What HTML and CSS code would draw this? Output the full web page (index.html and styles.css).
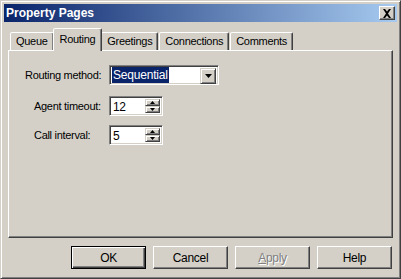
FILE: index.html
```html
<!DOCTYPE html>
<html>
<head>
<meta charset="utf-8">
<link rel="stylesheet" href="styles.css">
</head>
<body>
<div class="window">
  <div class="titlebar">
    <span class="title">Property Pages</span>
    <span class="close">
      <svg width="10" height="9" viewBox="0 0 10 9"><path d="M1 0h2l2 2.5L7 0h2L6 4.5 9 9H7L5 6.5 3 9H1l3-4.5z" fill="#000"/></svg>
    </span>
  </div>
  <div class="body">
    <div class="tabs">
      <div class="tab first">Queue</div>
      <div class="tab active">Routing</div>
      <div class="tab">Greetings</div>
      <div class="tab">Connections</div>
      <div class="tab">Comments</div>
    </div>
    <div class="panel">
      <div class="row r1">
        <span class="label">Routing method:</span>
        <div class="select">
          <span class="selval"><span class="hl">Sequential</span></span>
          <span class="ddbtn"><svg width="7" height="4" viewBox="0 0 7 4"><path d="M0 0h7L3.5 4z" fill="#000"/></svg></span>
        </div>
      </div>
      <div class="row r2">
        <span class="label ind">Agent timeout:</span>
        <div class="spin">
          <span class="val">12</span>
          <span class="arrows">
            <span class="ab"><svg width="5" height="3" viewBox="0 0 5 3"><path d="M2.5 0L5 3H0z" fill="#000"/></svg></span>
            <span class="ab"><svg width="5" height="3" viewBox="0 0 5 3"><path d="M0 0h5L2.5 3z" fill="#000"/></svg></span>
          </span>
        </div>
      </div>
      <div class="row r3">
        <span class="label ind">Call interval:</span>
        <div class="spin">
          <span class="val">5</span>
          <span class="arrows">
            <span class="ab"><svg width="5" height="3" viewBox="0 0 5 3"><path d="M2.5 0L5 3H0z" fill="#000"/></svg></span>
            <span class="ab"><svg width="5" height="3" viewBox="0 0 5 3"><path d="M0 0h5L2.5 3z" fill="#000"/></svg></span>
          </span>
        </div>
      </div>
    </div>
    <div class="buttons">
      <div class="btn default">OK</div>
      <div class="btn">Cancel</div>
      <div class="btn disabled"><u>A</u>pply</div>
      <div class="btn">Help</div>
    </div>
  </div>
</div>
</body>
</html>
```
FILE: styles.css
```css
html, body { margin: 0; padding: 0; }
body { width: 401px; height: 279px; overflow: hidden; background: #d4d0c8; font-family: "Liberation Sans", Arial, sans-serif; font-size: 11px; letter-spacing: -0.3px; color: #000; }
.window { box-sizing: border-box; width: 401px; height: 279px; background: #d4d0c8; border: 1px solid; border-color: #d4d0c8 #404040 #404040 #d4d0c8; box-shadow: inset 1px 1px 0 #fff, inset -1px -1px 0 #808080; padding: 3px; display: flex; flex-direction: column; }
.titlebar { height: 18px; background: linear-gradient(to right, #0a246a, #a6caf0); display: flex; align-items: center; justify-content: space-between; padding: 0 2px 0 2px; }
.title { color: #fff; font-weight: bold; font-size: 12px; letter-spacing: 0; }
.close { width: 16px; height: 14px; box-sizing: border-box; background: #d4d0c8; border: 1px solid; border-color: #fff #404040 #404040 #fff; box-shadow: inset -1px -1px 0 #808080; display: flex; align-items: center; justify-content: center; }
.body { flex: 1; display: flex; flex-direction: column; padding: 6px 4px 0 4px; }
.tabs { display: flex; align-items: flex-end; height: 22px; padding-left: 2px; position: relative; z-index: 1; }
.tab { height: 18px; box-sizing: border-box; padding: 2px 5px 0 5px; border: 1px solid; border-bottom: none; border-color: #fff #404040 transparent #fff; box-shadow: inset -1px 0 0 #808080; border-radius: 2px 2px 0 0; background: #d4d0c8; margin-right: 1px; }
.tab.active { height: 23px; margin: 0 -1px -1px -2px; padding: 4px 6px 0 6px; position: relative; z-index: 2; }
.panel { height: 188px; box-sizing: border-box; border: 1px solid; border-color: #fff #404040 #404040 #fff; box-shadow: inset -1px -1px 0 #808080; padding: 14px 0 0 16px; display: flex; flex-direction: column; }
.row { display: flex; align-items: center; height: 20px; }
.r2 { margin-top: 11px; }
.r3 { margin-top: 9px; }
.label { width: 84px; }
.label.ind { padding-left: 9px; width: 75px; }
.select { width: 110px; height: 20px; box-sizing: border-box; background: #fff; border: 1px solid; border-color: #808080 #fff #fff #808080; box-shadow: inset 1px 1px 0 #404040, inset -1px -1px 0 #d4d0c8; display: flex; padding: 2px; }
.selval { flex: 1; display: flex; align-items: center; padding-left: 0; }
.hl { background: #0a246a; color: #fff; padding: 0 1px; line-height: 16px; font-size: 12px; letter-spacing: -0.2px; }
.ddbtn { width: 16px; height: 16px; box-sizing: border-box; background: #d4d0c8; border: 1px solid; border-color: #d4d0c8 #404040 #404040 #d4d0c8; box-shadow: inset 1px 1px 0 #fff, inset -1px -1px 0 #808080; display: flex; align-items: center; justify-content: center; }
.spin { width: 54px; height: 20px; box-sizing: border-box; background: #fff; border: 1px solid; border-color: #808080 #fff #fff #808080; box-shadow: inset 1px 1px 0 #404040, inset -1px -1px 0 #d4d0c8; display: flex; padding: 2px; }
.val { flex: 1; font-size: 12px; padding-left: 1px; line-height: 16px; }
.arrows { width: 15px; display: flex; flex-direction: column; }
.ab { flex: 1; box-sizing: border-box; background: #d4d0c8; border: 1px solid; border-color: #d4d0c8 #404040 #404040 #d4d0c8; box-shadow: inset 1px 1px 0 #fff, inset -1px -1px 0 #808080; display: flex; align-items: center; justify-content: center; }
.buttons { display: flex; justify-content: flex-end; gap: 7px; padding-top: 8px; padding-right: 1px; }
.btn { width: 75px; height: 23px; box-sizing: border-box; border: 1px solid; border-color: #fff #404040 #404040 #fff; box-shadow: inset -1px -1px 0 #808080; display: flex; align-items: center; justify-content: center; font-size: 12px; }
.btn.default { border: 1px solid #000; box-shadow: inset 1px 1px 0 #fff, inset -1px -1px 0 #404040, inset -2px -2px 0 #808080; }
.btn.disabled { color: #808080; text-shadow: 1px 1px 0 #fff; }
```
